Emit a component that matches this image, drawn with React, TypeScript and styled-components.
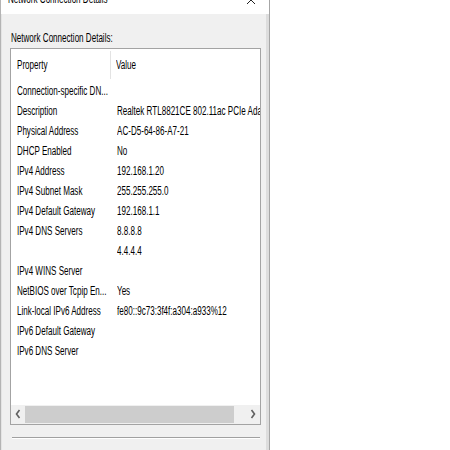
import React from "react";
import styled, { createGlobalStyle } from "styled-components";

const Global = createGlobalStyle`
  html, body { margin: 0; padding: 0; background: #ffffff; }
  body { font-family: "Liberation Sans", Arial, sans-serif; overflow: hidden; }
`;

const Window = styled.div`
  width: 270px;
  height: 450px;
  box-sizing: border-box;
  border-left: 1px solid #b4b4b4;
  border-right: 1px solid #a6a6a6;
  display: flex;
  flex-direction: column;
  background: #f0f0f0;
`;

const TitleBar = styled.div`
  height: 14px;
  flex: none;
  background: #ffffff;
  display: flex;
  align-items: flex-start;
  justify-content: space-between;
  overflow: hidden;
  padding: 0 8px 0 7px;
  border-right: 3px solid #ffffff;
`;

const Squeeze = styled.span<{ $scale?: number }>`
  display: inline-block;
  white-space: nowrap;
  transform: scaleX(${(p) => p.$scale ?? 0.645});
  transform-origin: left center;
`;

const TitleText = styled.div`
  font-size: 12.5px;
  line-height: 14px;
  color: #000;
  margin-top: -8px;
`;

const CloseIcon = styled.svg`
  width: 10px;
  height: 10px;
  margin-top: -5px;
  margin-right: 2px;
  flex: none;
`;

const Body = styled.div`
  flex: 1;
  display: flex;
  flex-direction: column;
  padding: 17px 5px 0 8px;
  border-right: 3px solid #dddddd;
  border-left: 1px solid #e4e4e4;
`;

const SectionLabel = styled.div`
  font-size: 12.5px;
  line-height: 14px;
  height: 14px;
  color: #000;
  padding-left: 1px;
  margin-bottom: 3px;
`;

const ListBox = styled.div`
  height: 377px;
  box-sizing: border-box;
  border: 1px solid #a3a3a3;
  background: #ffffff;
  display: flex;
  flex-direction: column;
  overflow: hidden;
  flex: none;
`;

const HeaderRow = styled.div`
  height: 32px;
  display: flex;
  align-items: center;
  flex: none;
`;

const HeaderCell = styled.div<{ $first?: boolean }>`
  height: 28px;
  display: flex;
  align-items: center;
  box-sizing: border-box;
  width: ${(p) => (p.$first ? "100px" : "auto")};
  flex: ${(p) => (p.$first ? "none" : "1")};
  padding-left: ${(p) => (p.$first ? "6px" : "5px")};
  border-right: ${(p) => (p.$first ? "1px solid #e3e3e3" : "none")};
  font-size: 12.5px;
  color: #000;
  overflow: hidden;
`;

const Row = styled.div`
  height: 20px;
  display: flex;
  align-items: center;
  flex: none;
`;

const Cell = styled.div<{ $first?: boolean }>`
  width: ${(p) => (p.$first ? "100px" : "auto")};
  flex: ${(p) => (p.$first ? "none" : "1")};
  box-sizing: border-box;
  padding-left: ${(p) => (p.$first ? "6px" : "6px")};
  font-size: 12.5px;
  line-height: 20px;
  color: #000;
  overflow: hidden;
  white-space: nowrap;
`;

const ScrollBar = styled.div`
  margin-top: auto;
  height: 19px;
  flex: none;
  background: #f0f0f0;
  display: flex;
  align-items: center;
  padding-bottom: 1px;
  box-sizing: border-box;
`;

const Arrow = styled.svg`
  width: 14px;
  height: 12px;
  flex: none;
`;

const Thumb = styled.div`
  height: 17px;
  width: 209px;
  background: #cdcdcd;
  flex: none;
`;

const Track = styled.div`
  flex: 1;
  display: flex;
  align-items: center;
  height: 100%;
`;

const Separator = styled.div`
  margin: 12px 1px 0 2px;
  height: 1px;
  background: #a0a0a0;
  border-bottom: 1px solid #ffffff;
`;

const rows: [string, string][] = [
  ["Connection-specific DN...", ""],
  ["Description", "Realtek RTL8821CE 802.11ac PCIe Adapter"],
  ["Physical Address", "AC-D5-64-86-A7-21"],
  ["DHCP Enabled", "No"],
  ["IPv4 Address", "192.168.1.20"],
  ["IPv4 Subnet Mask", "255.255.255.0"],
  ["IPv4 Default Gateway", "192.168.1.1"],
  ["IPv4 DNS Servers", "8.8.8.8"],
  ["", "4.4.4.4"],
  ["IPv4 WINS Server", ""],
  ["NetBIOS over Tcpip En...", "Yes"],
  ["Link-local IPv6 Address", "fe80::9c73:3f4f:a304:a933%12"],
  ["IPv6 Default Gateway", ""],
  ["IPv6 DNS Server", ""],
];

export default function App() {
  return (
    <>
      <Global />
      <Window>
        <TitleBar>
          <TitleText>
            <Squeeze>Network Connection Details</Squeeze>
          </TitleText>
          <CloseIcon viewBox="0 0 10 10">
            <path d="M1 1 L9 9 M9 1 L1 9" stroke="#222" strokeWidth="1" fill="none" />
          </CloseIcon>
        </TitleBar>
        <Body>
          <SectionLabel>
            <Squeeze>Network Connection Details:</Squeeze>
          </SectionLabel>
          <ListBox>
            <HeaderRow>
              <HeaderCell $first>
                <Squeeze>Property</Squeeze>
              </HeaderCell>
              <HeaderCell>
                <Squeeze>Value</Squeeze>
              </HeaderCell>
            </HeaderRow>
            {rows.map(([k, v], i) => (
              <Row key={i}>
                <Cell $first>
                  <Squeeze>{k}</Squeeze>
                </Cell>
                <Cell>
                  <Squeeze>{v}</Squeeze>
                </Cell>
              </Row>
            ))}
            <ScrollBar>
              <Arrow viewBox="0 0 14 12">
                <path d="M8.5 2 L5.5 6 L8.5 10" stroke="#606060" strokeWidth="1.6" fill="none" />
              </Arrow>
              <Track>
                <Thumb />
              </Track>
              <Arrow viewBox="0 0 14 12">
                <path d="M5.5 2 L8.5 6 L5.5 10" stroke="#606060" strokeWidth="1.6" fill="none" />
              </Arrow>
            </ScrollBar>
          </ListBox>
          <Separator />
        </Body>
      </Window>
    </>
  );
}
